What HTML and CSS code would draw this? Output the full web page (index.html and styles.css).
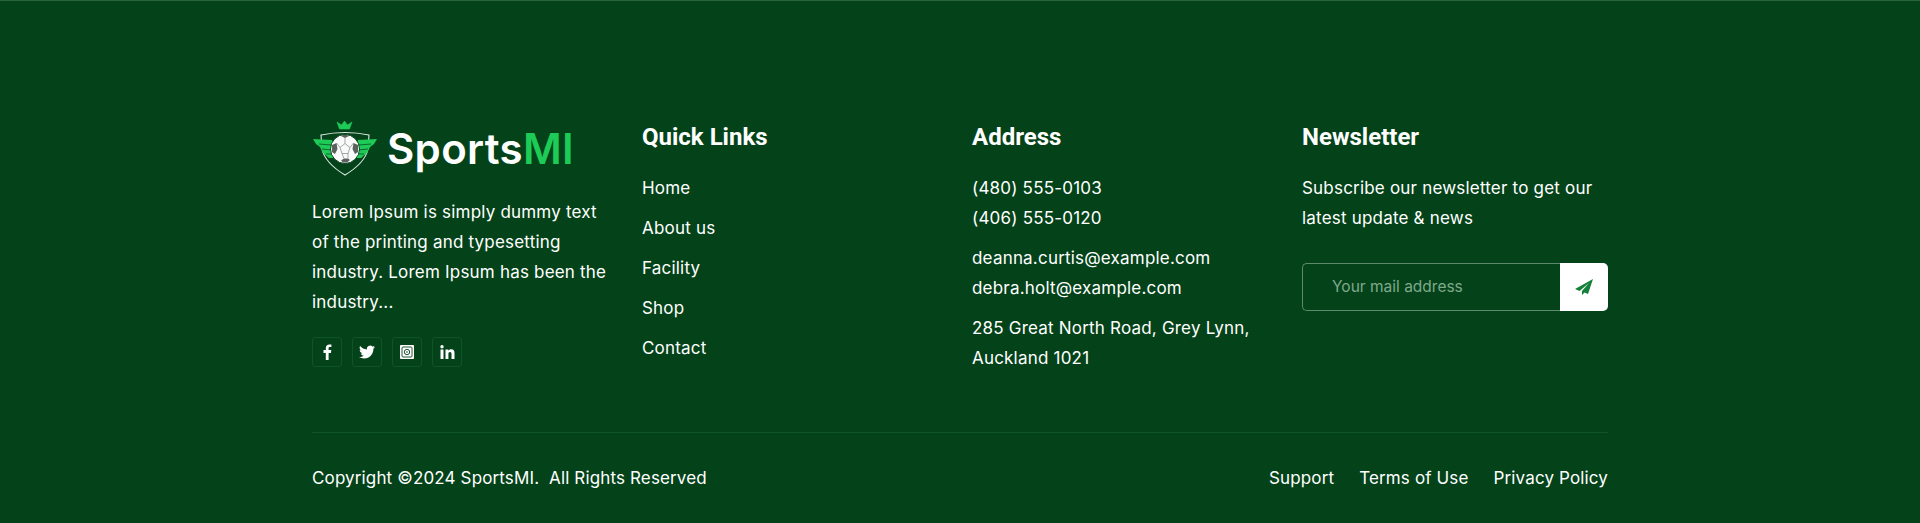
FILE: index.html
```html
<!DOCTYPE html>
<html lang="en">

<head>
  <meta charset="UTF-8">
  <title>SportsMI Footer</title>
  <link rel="stylesheet" href="styles.css">
</head>

<body>

  <footer class="footer">
    <div class="container">
      <div class="columns">

        <div class="col">
          <div class="logo">
            <svg class="logo-mark" width="66" height="56" viewBox="0 0 66 56">
              <path d="M27.500 8 25 1 29.500 4 32.500 0 35.500 4 40 1 37.500 8Z" fill="#1ecb57" stroke="#1ecb57" stroke-width=".6" stroke-linejoin="round"/>
              <path d="M9 14Q33 9 57 14L56 28Q53 42 33 54Q13 42 10 28Z" fill="none" stroke="#dfe9e2" stroke-width="1.100"/>
              <path d="M1 18 20 19 23 37 17 37 11 32 8 26 4 23Z" fill="#1ecb57"/>
              <path d="M65 18 46 19 43 37 49 37 55 32 58 26 62 23Z" fill="#1ecb57"/>
              <path d="M7 23 19 24M10 28 20 29M14 33 21 33M59 23 47 24M56 28 46 29M52 33 45 33" stroke="#0b6a30" stroke-width="1.100"/>
              <circle cx="33" cy="28" r="14.500" fill="#fafafa" stroke="#05441c" stroke-width="1"/>
              <path d="M29 15 33 17 37 15 35 14 31 14ZM41.500 22 46 24 46 31 43 33 40.500 28ZM24.500 22 20 24 20 31 23 33 25.500 28ZM29 39.500 32 37.500 36 37.500 38 39 35 41.500 31 41.500Z" fill="#59635c"/>
              <path d="M33 17 33 22.500 38 26.500 36 32.500 30 32.500 28 26.500 33 22.500M38 26.500 41.500 22M28 26.500 24.500 22M36 32.500 36 37.500M30 32.500 32 37.500" fill="none" stroke="#7b847e" stroke-width=".7"/>
            </svg>
            <span class="logo-text">Sports<span class="logo-accent">MI</span></span>
          </div>
          <p class="about">Lorem Ipsum is simply dummy text<br>of the printing and typesetting<br>industry. Lorem Ipsum has been the<br>industry...</p>
          <div class="socials">
            <a class="social" href="#">
              <svg width="16" height="16" viewBox="0 0 16 16"><path d="M9.600 16V8.900h2.300l.4-2.800H9.600V4.400c0-.8.300-1.300 1.400-1.300h1.400V.6C12.100.6 11.300.5 10.400.5 8.300.5 6.800 1.800 6.800 4.100v2H4.500v2.800h2.300V16Z" fill="#fff"/></svg>
            </a>
            <a class="social" href="#">
              <svg width="16" height="16" viewBox="0 0 24 24"><path d="M23.950 4.570a10 10 0 0 1-2.820.77 4.960 4.960 0 0 0 2.160-2.720c-.95.550-2 .96-3.130 1.190a4.920 4.920 0 0 0-8.380 4.480C7.690 8.100 4.070 6.130 1.640 3.160a4.820 4.820 0 0 0-.67 2.480c0 1.710.87 3.210 2.190 4.100a4.900 4.900 0 0 1-2.230-.62v.06a4.920 4.920 0 0 0 3.950 4.830 5 5 0 0 1-2.210.08 4.940 4.940 0 0 0 4.600 3.420A9.870 9.870 0 0 1 0 19.540a14 14 0 0 0 7.560 2.210c9.050 0 14-7.500 14-13.980 0-.21 0-.42-.02-.63a9.940 9.940 0 0 0 2.410-2.570Z" fill="#fff"/></svg>
            </a>
            <a class="social" href="#">
              <svg width="16" height="16" viewBox="0 0 16 16">
                <rect x="1" y="1" width="14" height="14" rx="1" fill="#fff"/>
                <rect x="3" y="3" width="10" height="10" rx="1" fill="none" stroke="#05441c" stroke-width=".9"/>
                <circle cx="8" cy="8" r="2.700" fill="none" stroke="#05441c" stroke-width=".9"/>
                <circle cx="8" cy="8" r=".8" fill="#05441c"/>
              </svg>
            </a>
            <a class="social" href="#">
              <svg width="16" height="16" viewBox="0 0 16 16"><path d="M1.500 5.500h3V15h-3ZM3 1a1.700 1.700 0 1 1 0 3.400A1.700 1.700 0 0 1 3 1Zm3.500 4.500h2.800v1.300c.5-.9 1.500-1.500 2.900-1.500 2.500 0 3.300 1.600 3.300 4V15h-3v-5c0-1.200-.3-2.100-1.500-2.100s-1.600.9-1.600 2.100v5h-2.900Z" fill="#fff"/></svg>
            </a>
          </div>
        </div>

        <div class="col">
          <h3>Quick Links</h3>
          <ul class="links">
            <li><a href="#">Home</a></li>
            <li><a href="#">About us</a></li>
            <li><a href="#">Facility</a></li>
            <li><a href="#">Shop</a></li>
            <li><a href="#">Contact</a></li>
          </ul>
        </div>

        <div class="col">
          <h3>Address</h3>
          <p class="info">(480) 555-0103<br>(406) 555-0120</p>
          <p class="info">deanna.curtis@example.com<br>debra.holt@example.com</p>
          <p class="info">285 Great North Road, Grey Lynn,<br>Auckland 1021</p>
        </div>

        <div class="col">
          <h3>Newsletter</h3>
          <p class="info">Subscribe our newsletter to get our<br>latest update &amp; news</p>
          <form class="subscribe">
            <input type="email" placeholder="Your mail address">
            <button type="button">
              <svg width="20" height="20" viewBox="0 0 20 20"><path d="M19 2 1 12l4.500 2L15 6l-7 8v4l2.500-2.500 3.500 1.500Z" fill="#14803c"/></svg>
            </button>
          </form>
        </div>

      </div>

      <div class="bottom">
        <span>Copyright ©2024 SportsMI.&nbsp; All Rights Reserved</span>
        <div class="bottom-links">
          <a href="#">Support</a>
          <a href="#">Terms of Use</a>
          <a href="#">Privacy Policy</a>
        </div>
      </div>
    </div>
  </footer>

</body>

</html>
```

FILE: styles.css
```css
* {
  box-sizing: border-box;
}

body {
  margin: 0;
  background: #04431a;
  color: #fff;
  font-family: Inter, "Open Sans", sans-serif;
  font-size: 17px;
  letter-spacing: 0.2px;
  line-height: 30px;
}

a {
  color: #fff;
  text-decoration: none;
}

.footer {
  height: 523px;
  padding-top: 120px;
  border-top: 1px solid #2b6240;
}

.container {
  width: 1296px;
  margin: 0 auto;
}

.columns {
  display: grid;
  grid-template-columns: repeat(4, 330px);
  height: 311px;
}

h3 {
  margin: 0 0 20px;
  font-family: Roboto, sans-serif;
  font-size: 24px;
  font-weight: 700;
  letter-spacing: normal;
  line-height: 32px;
}

.logo {
  display: flex;
  align-items: center;
  gap: 9px;
  height: 56px;
  margin-bottom: 20px;
}

.logo-text {
  font-size: 42px;
  font-weight: 600;
  letter-spacing: 0.3px;
  line-height: 56px;
}

.logo-accent {
  color: #1ecb57;
}

.about {
  margin: 0 0 20px;
}

.socials {
  display: flex;
  gap: 10px;
}

.social {
  display: flex;
  align-items: center;
  justify-content: center;
  width: 30px;
  height: 30px;
  border: 1px solid #0e5428;
  border-radius: 3px;
}

.links {
  margin: 0;
  padding: 0;
  list-style: none;
}

.links li {
  margin-bottom: 10px;
}

.info {
  margin: 0 0 10px;
}

.subscribe {
  display: flex;
  width: 306px;
  height: 48px;
  margin-top: 30px;
}

.subscribe input {
  flex: 1;
  min-width: 0;
  padding: 0 29px 2px;
  background: transparent;
  border: 1px solid #5b8a6c;
  border-right: none;
  border-radius: 5px 0 0 5px;
  color: #fff;
  font-family: inherit;
  font-size: 15.5px;
}

.subscribe input::placeholder {
  color: #7fa98a;
  opacity: 1;
}

.subscribe button {
  display: flex;
  align-items: center;
  justify-content: center;
  width: 48px;
  padding: 0;
  background: #fff;
  border: none;
  border-radius: 0 5px 5px 0;
}

.bottom {
  display: flex;
  justify-content: space-between;
  align-items: center;
  height: 90px;
  border-top: 1px solid #0e5428;
  letter-spacing: 0.14px;
}

.bottom-links {
  display: flex;
  gap: 25px;
}
```
